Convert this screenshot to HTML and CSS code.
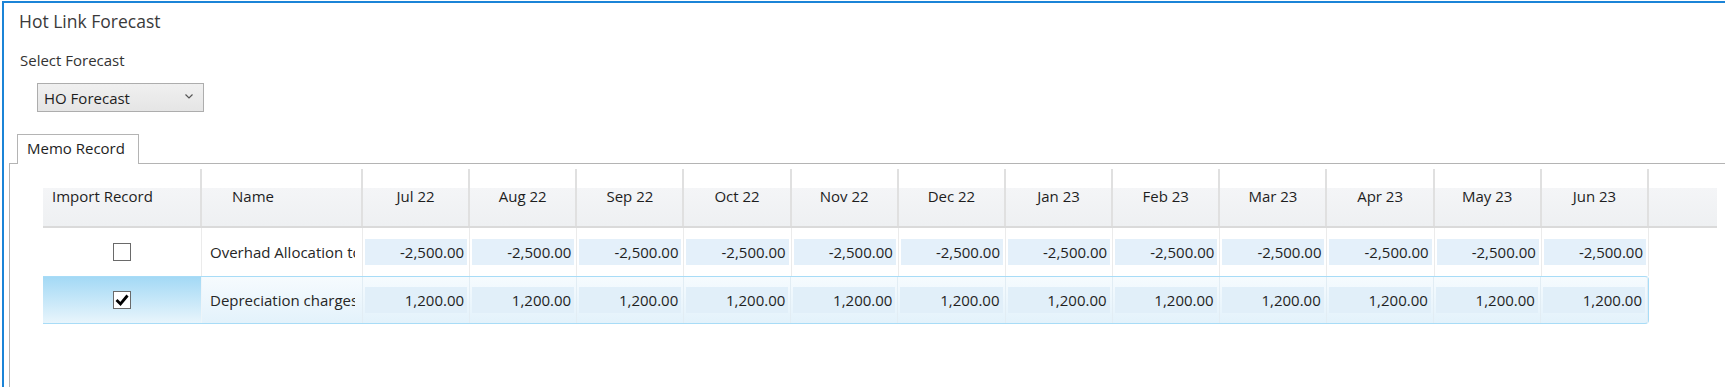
FILE: index.html
```html
<!DOCTYPE html>
<html>
<head>
	<meta charset="UTF-8">
	<title>Hot Link Forecast</title>
	<link rel="stylesheet" href="styles.css">
</head>
<body>
	<div class="window">
		<div class="title">Hot Link Forecast</div>
		<div class="label">Select Forecast</div>
		<div class="combo">
			<span>HO Forecast</span>
			<svg class="chev" width="8" height="5" viewBox="0 0 8 5"><polyline points="0.5,0.5 4,4 7.5,0.5" fill="none" stroke="#555" stroke-width="1.2"/></svg>
		</div>
		<div class="tabs">
			<div class="tabstrip">
				<div class="tab">Memo Record</div>
			</div>
			<div class="panel">
				<div class="ghead">
					<div class="hcell left">Import Record</div>
					<div class="hcell name">Name</div>
					<div class="hcell">Jul 22</div>
					<div class="hcell">Aug 22</div>
					<div class="hcell">Sep 22</div>
					<div class="hcell">Oct 22</div>
					<div class="hcell">Nov 22</div>
					<div class="hcell">Dec 22</div>
					<div class="hcell">Jan 23</div>
					<div class="hcell">Feb 23</div>
					<div class="hcell">Mar 23</div>
					<div class="hcell">Apr 23</div>
					<div class="hcell">May 23</div>
					<div class="hcell">Jun 23</div>
					<div class="hcell filler"></div>
				</div>
				<div class="grow">
					<div class="cell chk"><span class="box"></span></div>
					<div class="cell nm"><span>Overhad Allocation to Branch</span></div>
					<div class="cell val"><span>-2,500.00</span></div>
					<div class="cell val"><span>-2,500.00</span></div>
					<div class="cell val"><span>-2,500.00</span></div>
					<div class="cell val"><span>-2,500.00</span></div>
					<div class="cell val"><span>-2,500.00</span></div>
					<div class="cell val"><span>-2,500.00</span></div>
					<div class="cell val"><span>-2,500.00</span></div>
					<div class="cell val"><span>-2,500.00</span></div>
					<div class="cell val"><span>-2,500.00</span></div>
					<div class="cell val"><span>-2,500.00</span></div>
					<div class="cell val"><span>-2,500.00</span></div>
					<div class="cell val"><span>-2,500.00</span></div>
				</div>
				<div class="grow sel">
					<div class="cell chk"><span class="box"><svg width="16" height="16" viewBox="0 0 16 16"><polyline points="2.5,8 6.5,12 13.5,3.5" fill="none" stroke="#000" stroke-width="2.8"/></svg></span></div>
					<div class="cell nm"><span>Depreciation charges</span></div>
					<div class="cell val"><span>1,200.00</span></div>
					<div class="cell val"><span>1,200.00</span></div>
					<div class="cell val"><span>1,200.00</span></div>
					<div class="cell val"><span>1,200.00</span></div>
					<div class="cell val"><span>1,200.00</span></div>
					<div class="cell val"><span>1,200.00</span></div>
					<div class="cell val"><span>1,200.00</span></div>
					<div class="cell val"><span>1,200.00</span></div>
					<div class="cell val"><span>1,200.00</span></div>
					<div class="cell val"><span>1,200.00</span></div>
					<div class="cell val"><span>1,200.00</span></div>
					<div class="cell val"><span>1,200.00</span></div>
				</div>
			</div>
		</div>
	</div>
</body>
</html>
```
FILE: styles.css
```css
*{margin:0;padding:0;box-sizing:border-box;}
html,body{
	background:#fff;
	overflow:hidden;
}
body{
	font-family:"Open Sans","Noto Sans",sans-serif;
	font-size:15px;
	color:#262626;
}
.window{
	margin:1px 0 0 2px;
	height:386px;
	border-top:2px solid #1b84d7;
	border-left:2px solid #1b84d7;
}
.title{
	font-size:17.5px;
	line-height:24px;
	color:#3a3a3a;
	padding:6px 0 0 15px;
}
.label{
	line-height:20px;
	margin-top:17px;
	padding-left:16px;
	color:#333;
}
.combo{
	margin:13px 0 0 33px;
	width:167px;
	height:29px;
	border:1px solid #adadad;
	background:linear-gradient(#f0f0f0,#e5e5e5);
	display:flex;
	align-items:center;
	justify-content:space-between;
	padding:0 10px 0 6px;
	line-height:20px;
	color:#1e1e1e;
}
.chev{margin-top:-3px;}
.tabs{
	margin:22px 0 0 5px;
}
.tabstrip{
	display:flex;
	padding-left:8px;
}
.tab{
	position:relative;
	z-index:1;
	width:122px;
	height:30px;
	margin-bottom:-1px;
	border:1px solid #b4b4b4;
	border-bottom:none;
	background:#fff;
	padding:3px 0 0 9px;
	line-height:20px;
	color:#1e1e1e;
}
.panel{
	border-top:1px solid #b4b4b4;
	border-left:1px solid #b4b4b4;
	height:230px;
	padding:5px 0 0 33px;
}
.ghead{
	display:grid;
	grid-template-columns:159px 161px repeat(12,1fr) 68px;
	width:1674px;
	height:59px;
	border-bottom:2px solid #dadada;
}
.hcell{
	display:flex;
	align-items:center;
	justify-content:center;
	line-height:20px;
	padding-bottom:4px;
	color:#1e1e1e;
	border-right:2px solid #e0e0e0;
	background:linear-gradient(#fff 0,#fff 19px,#f4f5f7 19px,#eef0f2 100%);
}
.hcell.left{
	justify-content:flex-start;
	padding-left:9px;
}
.hcell.name{
	justify-content:flex-start;
	padding-left:30px;
}
.hcell.filler{border-right:none;}
.grow{
	display:grid;
	grid-template-columns:159px 161px repeat(12,1fr);
	width:1606px;
	height:48px;
}
.cell{
	border-right:1px solid #ebebeb;
	display:flex;
	align-items:center;
	min-width:0;
}
.chk{justify-content:center;}
.box{
	width:18px;
	height:18px;
	border:1px solid #6a6a6a;
	background:#fff;
	display:flex;
	align-items:center;
	justify-content:center;
}
.nm{
	padding:0 7px 0 8px;
	color:#262626;
}
.nm span{
	display:block;
	width:100%;
	white-space:nowrap;
	overflow:hidden;
}
.val{
	padding:0 2px 0 2px;
}
.val span{
	display:block;
	width:100%;
	height:26px;
	line-height:26px;
	text-align:right;
	padding-right:3px;
	background:#e4f0fa;
	color:#1f1f1f;
}
.grow.sel{
	border:1px solid #a8dcf7;
	border-left:none;
	border-radius:0 4px 4px 0;
	background:linear-gradient(#f6fbfe,#e3f2fb);
}
.sel .cell{border-right-color:#e2edf4;}
.sel .chk{
	background:linear-gradient(#a3d9f5,#e8f5fc);
	border-radius:0 0 0 3px;
	border-right-color:#eef5f9;
}
.sel .val span{background:#e1eff9;}
```
